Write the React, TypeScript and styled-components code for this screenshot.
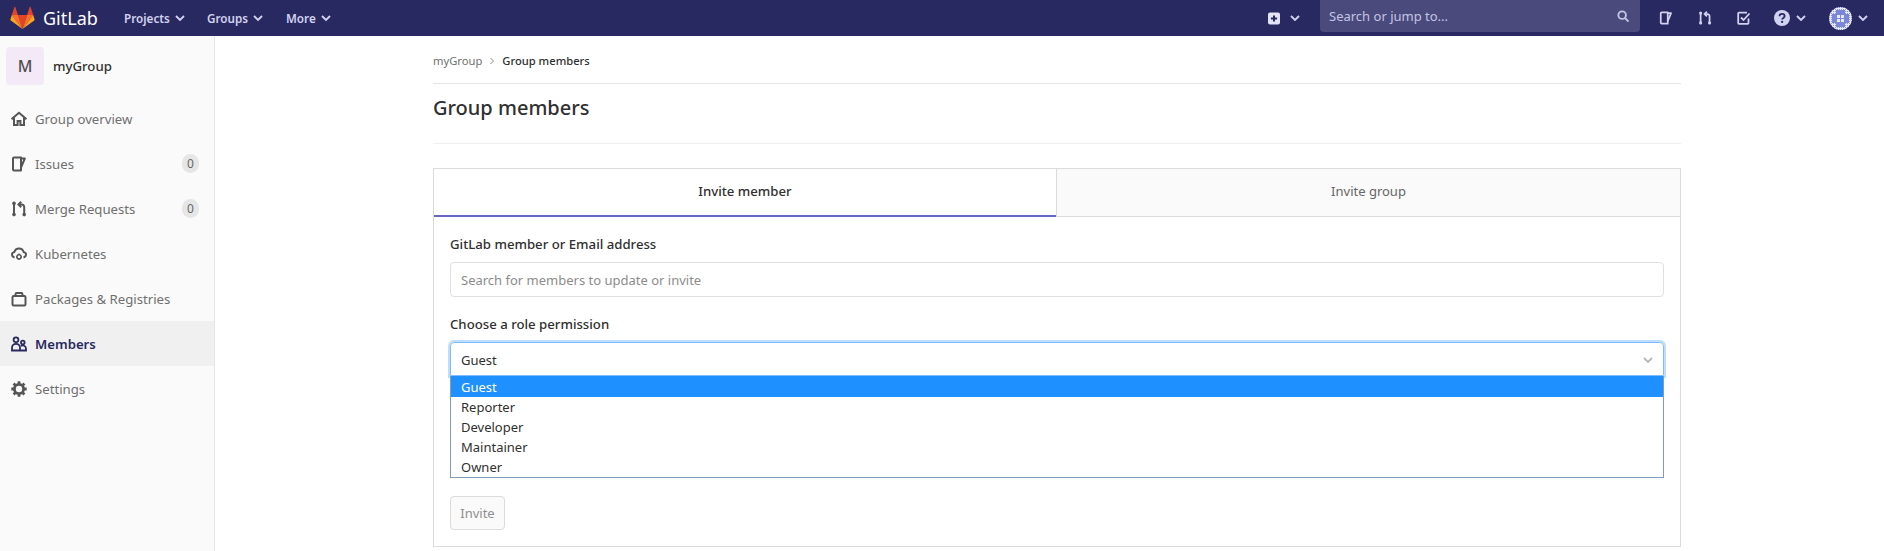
import React from 'react';
import styled, { createGlobalStyle } from 'styled-components';

const Global = createGlobalStyle`
  html, body { margin: 0; padding: 0; background: #fff; }
  body { font-family: "Noto Sans", "Open Sans", sans-serif; font-size: 13px; color: #303030; overflow: hidden; }
  * { box-sizing: border-box; }
`;

const Page = styled.div`width: 1884px; height: 551px; display: flex; flex-direction: column; overflow: hidden;`;
const TopBar = styled.header`height: 36px; flex: none; background: #292961; display: flex; align-items: center; color: #d1d1f0;`;
const Logo = styled.div`display: flex; align-items: center; margin-left: 10px; gap: 8px; width: 114px; color: #fff; font-size: 18px;`;
const NavItem = styled.div<{ $w: number }>`display: flex; align-items: center; gap: 5px; width: ${p => p.$w}px; font-size: 11.7px; font-weight: 600; color: #d1d1f0;`;
const Spacer = styled.div`flex: 1;`;
const PlusGroup = styled.div`display: flex; align-items: center; gap: 10px; margin-right: 20px;`;
const Search = styled.div`width: 320px; height: 32px; align-self: flex-start; background: #4a4a7d; border-radius: 0 0 4px 4px; display: flex; align-items: center; justify-content: space-between; padding: 0 11px 0 9px; color: #c4c4e4; font-size: 13px; margin-right: 19px;`;
const IconRow = styled.div`display: flex; align-items: center; gap: 25px; margin-right: 16px;`;
const IconGroup = styled.div<{ $shift: number }>`display: flex; align-items: center; gap: 6px; margin-left: ${p => p.$shift}px;`;

const Body = styled.div`flex: 1; display: flex; min-height: 0;`;
const Side = styled.aside`width: 215px; flex: none; background: #fafafa; border-right: 1px solid #e5e5e5;`;
const GroupHead = styled.div`display: flex; align-items: center; gap: 9px; height: 38px; margin: 11px 0; padding-left: 6px; font-size: 13.2px; font-weight: 500; color: #303030;`;
const GroupAvatar = styled.div`width: 38px; height: 38px; background: #f4e9f7; border-radius: 4px; display: flex; align-items: center; justify-content: center; font-size: 16px; color: #4f4f4f; font-weight: 500;`;
const SideItem = styled.div<{ $active?: boolean }>`height: 45px; display: flex; align-items: center; padding: 0 16px 0 11px; gap: 8px; font-size: 13.2px; color: ${p => p.$active ? '#292961' : '#707070'}; font-weight: ${p => p.$active ? 600 : 400}; background: ${p => p.$active ? '#f0f0f0' : 'transparent'};
  svg { color: ${p => p.$active ? '#292961' : '#555'}; flex: none; }`;
const SideLabel = styled.span`flex: 1;`;
const SideBadge = styled.span`width: 17px; height: 19px; border-radius: 10px; background: #e6e6e6; font-size: 12px; color: #666; display: flex; align-items: center; justify-content: center; margin-right: -1px;`;

const Main = styled.main`flex: 1; padding: 0 203px 0 218px;`;
const Crumbs = styled.nav`height: 48px; padding-top: 15px; display: flex; align-items: flex-start; font-size: 11.2px; border-bottom: 1px solid #e5e5e5; color: #707070; gap: 7px; line-height: 20px;`;
const CrumbSep = styled.span`display: flex; align-items: center; height: 20px;`;
const CrumbNow = styled.span`color: #303030; font-weight: 500;`;
const Title = styled.h1`margin: 0; height: 60px; display: flex; align-items: center; font-size: 20px; font-weight: 500; color: #303030; border-bottom: 1px solid #f0f0f0; padding-bottom: 12px;`;
const Card = styled.section`margin-top: 24px; height: 379px; border: 1px solid #dbdbdb;`;
const Tabs = styled.div`display: flex; height: 48px; border-bottom: 1px solid #dbdbdb;`;
const ActiveTab = styled.div`flex: none; width: 622px; display: flex; align-items: center; justify-content: center; padding-bottom: 4px; font-size: 13.2px; font-weight: 500; color: #303030; background: #fff; box-shadow: inset 0 -2px 0 #6666c4; margin-bottom: -1px;`;
const IdleTab = styled.div`flex: 1; display: flex; align-items: center; justify-content: center; padding-bottom: 3px; font-size: 13px; color: #666; background: #fafafa; border-left: 1px solid #dbdbdb;`;
const Form = styled.div`padding: 17px 16px 0 16px;`;
const Label = styled.div`font-size: 13.2px; font-weight: 500; color: #303030; height: 20px; line-height: 20px; margin-bottom: 8px;`;
const Input = styled.div`height: 35px; border: 1px solid #e0e0e0; border-radius: 4px; padding: 0 10px; display: flex; align-items: center; color: #8c8c8c; font-size: 13px; margin-bottom: 17px;`;
const Select = styled.div`height: 34px; border: 1px solid #80bdff; border-radius: 4px 4px 0 0; box-shadow: 0 0 0 2px #bfdeff; padding: 1px 10px 0; display: flex; align-items: center; justify-content: space-between; color: #303030; font-size: 13px;`;
const List = styled.div`border: 1px solid #7f9db9; border-top: none; height: 102px; font-size: 13px; color: #303030;`;
const Option = styled.div`height: 20px; line-height: 20px; padding-left: 10px;`;
const ActiveOption = styled(Option)`height: 21px; line-height: 22px; background: #1e90ff; color: #fff;`;
const Invite = styled.div`margin-top: 18px; width: 55px; height: 34px; border: 1px solid #dbdbdb; border-radius: 4px; background: #fafafa; color: #8f8f8f; font-size: 13px; display: flex; align-items: center; justify-content: center;`;

const Chevron = ({ size = 10, color = 'currentColor' }: { size?: number; color?: string }) => (
  <svg width={size} height={size} viewBox="0 0 10 10" fill="none"><path d="M1 3 5 7l4-4" stroke={color} strokeWidth="1.9" /></svg>
);
const SmallChevron = () => (
  <svg width="6" height="8" viewBox="0 0 6 8" fill="none"><path d="m1.500 1 3 3-3 3" stroke="#8c8c8c" strokeWidth="1" /></svg>
);
const Fox = () => (
  <svg width="25" height="24" viewBox="0 0 25 24">
    <path d="M12.5 23 8 9h9z" fill="#e24329" />
    <path d="M12.5 23 8 9H1.8z" fill="#fc6d26" />
    <path d="M1.8 9 .4 13.5c-.1.4 0 .8.4 1.1L12.5 23z" fill="#fca326" />
    <path d="M1.8 9H8L5.3 1c-.1-.4-.7-.4-.9 0z" fill="#e24329" />
    <path d="M12.5 23 17 9h6.2z" fill="#fc6d26" />
    <path d="m23.2 9 1.4 4.5c.1.4 0 .8-.4 1.1L12.5 23z" fill="#fca326" />
    <path d="M23.2 9H17l2.7-8c.1-.4.7-.4.9 0z" fill="#e24329" />
  </svg>
);
const IssuesIcon = ({ size = 16 }: { size?: number }) => (
  <svg width={size} height={size} viewBox="0 0 16 16" fill="none" stroke="currentColor" strokeWidth="2" strokeLinejoin="round"><path d="M2 2.500a1 1 0 0 1 1-1h7V14.500H3a1 1 0 0 1-1-1z" /><path d="M10 2.500h3.800L10 11.500" /></svg>
);
const MergeIcon = ({ size = 16 }: { size?: number }) => (
  <svg width={size} height={size} viewBox="0 0 16 16" fill="none" stroke="currentColor" strokeWidth="2"><path d="M3 3v10" /><circle cx="3" cy="2.400" r="1.800" fill="currentColor" stroke="none" /><circle cx="3" cy="13.600" r="1.800" fill="currentColor" stroke="none" /><circle cx="13.200" cy="13.600" r="1.800" fill="currentColor" stroke="none" /><path d="M13.200 13V6a2.500 2.500 0 0 0-2.500-2.500H8" /><path d="M10.200.800 7.500 3.500l2.700 2.700" /></svg>
);
const HomeIcon = () => (
  <svg width="16" height="16" viewBox="0 0 16 16" fill="none" stroke="currentColor" strokeWidth="2" strokeLinejoin="miter"><path d="M.5 8.200 8 1.800l7.500 6.400" /><path d="M3 6.500V14h3.600v-4h2.800v4H13V6.500" /></svg>
);
const CloudIcon = () => (
  <svg width="16" height="16" viewBox="0 0 16 16" fill="none" stroke="currentColor" strokeWidth="1.900"><path d="M3.500 11.500C1.800 11 1 10 1 8.600c0-1.300 1-2.300 2.300-2.500C3.900 4 5.800 2.500 8 2.500s4.100 1.500 4.700 3.600C14 6.300 15 7.300 15 8.600c0 1.400-.8 2.400-2.500 2.900" /><circle cx="8" cy="10.800" r="2.100" strokeWidth="1.500" /><path d="M8 7.500v1M8 13v1M5 10.800h1M10 10.800h1" strokeWidth="1.300" /></svg>
);
const PackageIcon = () => (
  <svg width="16" height="16" viewBox="0 0 16 16" fill="none" stroke="currentColor" strokeWidth="2" strokeLinejoin="round"><rect x="1.500" y="5" width="13" height="9.500" rx="1.200" /><path d="M4 5l1-3h6l1 3" /></svg>
);
const MembersIcon = () => (
  <svg width="16" height="16" viewBox="0 0 16 16" fill="none" stroke="currentColor" strokeWidth="1.800"><circle cx="5" cy="3.800" r="2.400" /><circle cx="11.800" cy="6.500" r="1.800" /><path d="M1 14.500v-2.700a4 4 0 0 1 8 0v2.700zM9 14.500h6v-2a3.200 3.200 0 0 0-5-2.500" /></svg>
);
const GearIcon = () => (
  <svg width="16" height="16" viewBox="0 0 16 16" fill="none" stroke="currentColor"><circle cx="8" cy="8" r="4.600" strokeWidth="2.800" /><path d="M8 .3v3M8 12.700v3M.3 8h3M12.700 8h3M2.600 2.600l2.100 2.100M11.300 11.300l2.100 2.100M2.600 13.400l2.100-2.100M11.300 4.700l2.100-2.100" strokeWidth="2.800" /></svg>
);
const SearchIcon = () => (
  <svg width="12" height="12" viewBox="0 0 14 14" fill="none" stroke="#c4c4e4" strokeWidth="2.200"><circle cx="6" cy="6" r="4.400" /><path d="m9 9 4.500 4.500" /></svg>
);
const PlusBox = () => (
  <svg width="12" height="13" viewBox="0 0 12 13"><path fillRule="evenodd" d="M2 .5h8a2 2 0 0 1 2 2v8a2 2 0 0 1-2 2H2a2 2 0 0 1-2-2v-8a2 2 0 0 1 2-2zm3 3v2.100H2.900v1.800H5v2.100h2V7.400h2.100V5.600H7V3.500z" fill="#e3e3f5" /></svg>
);
const TodoIcon = () => (
  <svg width="14" height="14" viewBox="0 0 14 14" fill="none" stroke="#d1d1f0" strokeWidth="1.800"><path d="M11.500 7.500V12a.8.800 0 0 1-.8.800H2a.8.800 0 0 1-.8-.8V2.500A.8.800 0 0 1 2 1.700h8" /><path d="m4 6.500 2.500 2.500 6-6.500" /></svg>
);
const HelpIcon = () => (
  <svg width="16" height="16" viewBox="0 0 14 14"><circle cx="7" cy="7" r="7" fill="#d1d1f0" /><path d="M4.800 5.400c0-1.200 1-2 2.300-2s2.200.8 2.200 1.900c0 1.700-2.200 1.600-2.200 3.100" fill="none" stroke="#292961" strokeWidth="1.600" /><circle cx="7.100" cy="10.400" r="1" fill="#292961" /></svg>
);
const Identicon = () => (
  <svg width="23" height="23" viewBox="0 0 23 23">
    <defs>
      <pattern id="dots" width="2" height="2" patternUnits="userSpaceOnUse"><rect width="2" height="2" fill="#e6e9fb" /><rect width="1" height="1" fill="#8d97e0" /></pattern>
      <clipPath id="round"><circle cx="11.500" cy="11.500" r="11.500" /></clipPath>
    </defs>
    <g clipPath="url(#round)">
      <rect width="23" height="23" fill="url(#dots)" />
      <path d="M7 3h9v4h4v9h-4v4H7v-4H3V7h4z" fill="#7c86d8" />
      <rect x="8" y="8" width="3" height="3" fill="#e6e9fb" />
      <rect x="12" y="8" width="3" height="3" fill="#e6e9fb" />
      <rect x="8" y="12" width="3" height="3" fill="#e6e9fb" />
      <rect x="12" y="12" width="3" height="3" fill="#e6e9fb" />
    </g>
  </svg>
);

const items: { label: string; icon: React.ReactNode; badge?: string; active?: boolean }[] = [
  { label: 'Group overview', icon: <HomeIcon /> },
  { label: 'Issues', icon: <IssuesIcon />, badge: '0' },
  { label: 'Merge Requests', icon: <MergeIcon />, badge: '0' },
  { label: 'Kubernetes', icon: <CloudIcon /> },
  { label: 'Packages & Registries', icon: <PackageIcon /> },
  { label: 'Members', icon: <MembersIcon />, active: true },
  { label: 'Settings', icon: <GearIcon /> },
];

export default function App() {
  return (
    <Page>
      <Global />
      <TopBar>
        <Logo><Fox /><span>GitLab</span></Logo>
        <NavItem $w={83}>Projects <Chevron /></NavItem>
        <NavItem $w={79}>Groups <Chevron /></NavItem>
        <NavItem $w={60}>More <Chevron /></NavItem>
        <Spacer />
        <PlusGroup><PlusBox /><Chevron /></PlusGroup>
        <Search><span>Search or jump to...</span><SearchIcon /></Search>
        <IconRow>
          <IssuesIcon size={14} />
          <MergeIcon size={14} />
          <TodoIcon />
          <IconGroup $shift={-2}><HelpIcon /><Chevron /></IconGroup>
          <IconGroup $shift={-2}><Identicon /><Chevron /></IconGroup>
        </IconRow>
      </TopBar>
      <Body>
        <Side>
          <GroupHead><GroupAvatar>M</GroupAvatar>myGroup</GroupHead>
          {items.map(i => (
            <SideItem key={i.label} $active={i.active}>
              {i.icon}
              <SideLabel>{i.label}</SideLabel>
              {i.badge && <SideBadge>{i.badge}</SideBadge>}
            </SideItem>
          ))}
        </Side>
        <Main>
          <Crumbs>myGroup <CrumbSep><SmallChevron /></CrumbSep> <CrumbNow>Group members</CrumbNow></Crumbs>
          <Title>Group members</Title>
          <Card>
            <Tabs>
              <ActiveTab>Invite member</ActiveTab>
              <IdleTab>Invite group</IdleTab>
            </Tabs>
            <Form>
              <Label>GitLab member or Email address</Label>
              <Input>Search for members to update or invite</Input>
              <Label>Choose a role permission</Label>
              <Select>Guest <Chevron color="#b8b8b8" /></Select>
              <List>
                <ActiveOption>Guest</ActiveOption>
                <Option>Reporter</Option>
                <Option>Developer</Option>
                <Option>Maintainer</Option>
                <Option>Owner</Option>
              </List>
              <Invite>Invite</Invite>
            </Form>
          </Card>
        </Main>
      </Body>
    </Page>
  );
}
